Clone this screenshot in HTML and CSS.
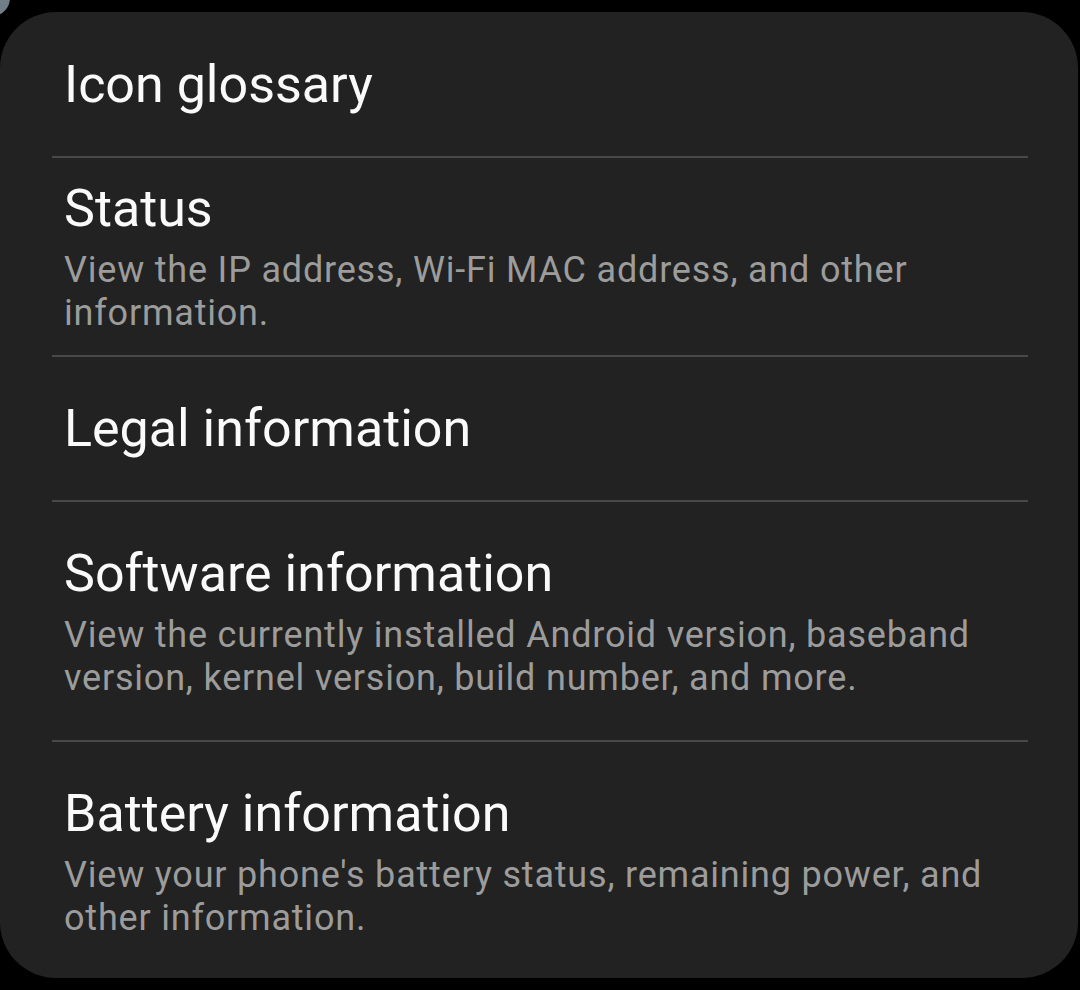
FILE: index.html
```html
<!DOCTYPE html>
<html lang="en">
<head>
    <meta charset="UTF-8">
    <meta name="viewport" content="width=device-width, initial-scale=1.0">
    <title>About phone</title>
    <link rel="stylesheet" href="styles.css">
</head>
<body>
    <div class="cornerDot"></div>
    <div class="card">
        <ul class="menuList">
            <li class="menuItem">
                <div class="itemTitle">Icon glossary</div>
            </li>
            <li class="menuItem compact">
                <div class="itemTitle">Status</div>
                <div class="itemSub">View the IP address, Wi-Fi MAC address, and other information.</div>
            </li>
            <li class="menuItem">
                <div class="itemTitle">Legal information</div>
            </li>
            <li class="menuItem">
                <div class="itemTitle">Software information</div>
                <div class="itemSub">View the currently installed Android version, baseband version, kernel version, build number, and more.</div>
            </li>
            <li class="menuItem">
                <div class="itemTitle">Battery information</div>
                <div class="itemSub">View your phone's battery status, remaining power, and other information.</div>
            </li>
        </ul>
    </div>
</body>
</html>
```

FILE: styles.css
```css
/* dark settings list, one ui style */

body {
    margin: 0;
    background: #000;
    font-family: Roboto, "Noto Sans", sans-serif;
    overflow: hidden;
}

.cornerDot {
    position: absolute;
    left: -26px;
    top: -20px;
    width: 36px;
    height: 36px;
    border-radius: 50%;
    background: #6f7e89;
}

.card {
    margin: 12px 2px 0 0;
    height: 966px;
    box-sizing: border-box;
    padding-top: 1px;
    background: #212221;
    border-radius: 56px;
}

.menuList {
    list-style: none;
    margin: 0;
    padding: 0 50px 0 52px;
}

.menuItem {
    padding: 41px 14px 40px 12px;
}

.menuItem + .menuItem {
    border-top: 2px solid #484948;
}

.menuItem.compact {
    padding-top: 20px;
    padding-bottom: 20px;
}

.itemTitle {
    font-size: 52px;
    line-height: 62px;
    color: #fafafa;
}

.itemSub {
    margin-top: 9px;
    font-size: 36px;
    line-height: 43px;
    letter-spacing: 0.8px;
    color: #9c9c9c;
}
```
